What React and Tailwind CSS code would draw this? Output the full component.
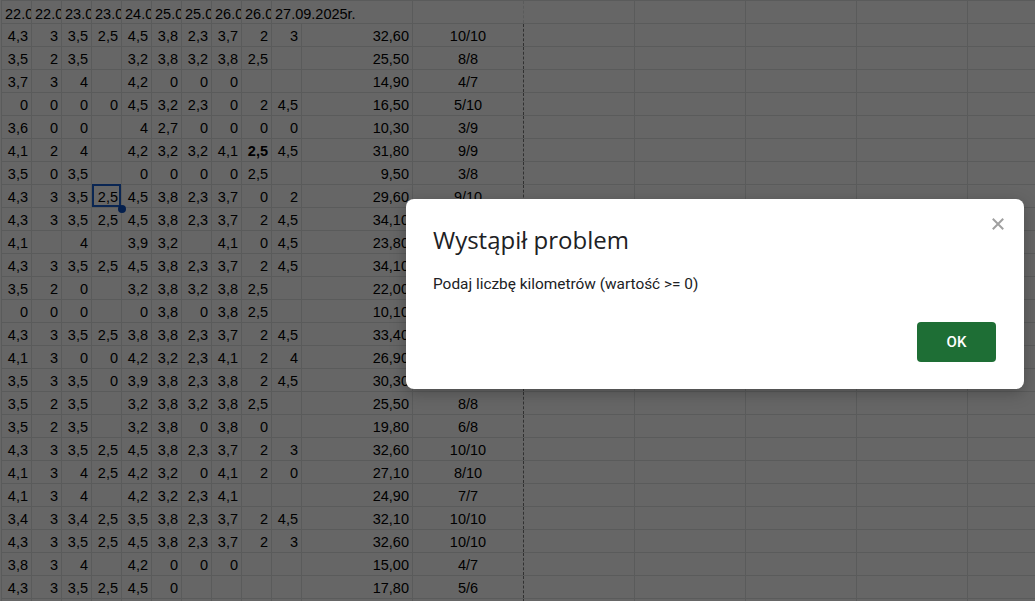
import React from 'react';

// sheet data: columns A..L, empty string = empty cell
const header = ['22.09.2025r.', '22.09.2025r.', '23.09.2025r.', '23.09.2025r.', '24.09.2025r.', '25.09.2025r.', '25.09.2025r.', '26.09.2025r.', '26.09.2025r.', '27.09.2025r.', '', ''];

const rows = [
  ['4,3', '3', '3,5', '2,5', '4,5', '3,8', '2,3', '3,7', '2', '3', '32,60', '10/10'],
  ['3,5', '2', '3,5', '', '3,2', '3,8', '3,2', '3,8', '2,5', '', '25,50', '8/8'],
  ['3,7', '3', '4', '', '4,2', '0', '0', '0', '', '', '14,90', '4/7'],
  ['0', '0', '0', '0', '4,5', '3,2', '2,3', '0', '2', '4,5', '16,50', '5/10'],
  ['3,6', '0', '0', '', '4', '2,7', '0', '0', '0', '0', '10,30', '3/9'],
  ['4,1', '2', '4', '', '4,2', '3,2', '3,2', '4,1', '2,5', '4,5', '31,80', '9/9'],
  ['3,5', '0', '3,5', '', '0', '0', '0', '0', '2,5', '', '9,50', '3/8'],
  ['4,3', '3', '3,5', '2,5', '4,5', '3,8', '2,3', '3,7', '0', '2', '29,60', '9/10'],
  ['4,3', '3', '3,5', '2,5', '4,5', '3,8', '2,3', '3,7', '2', '4,5', '34,10', '10/10'],
  ['4,1', '', '4', '', '3,9', '3,2', '', '4,1', '0', '4,5', '23,80', '7/8'],
  ['4,3', '3', '3,5', '2,5', '4,5', '3,8', '2,3', '3,7', '2', '4,5', '34,10', '10/10'],
  ['3,5', '2', '0', '', '3,2', '3,8', '3,2', '3,8', '2,5', '', '22,00', '8/8'],
  ['0', '0', '0', '', '0', '3,8', '0', '3,8', '2,5', '', '10,10', '4/8'],
  ['4,3', '3', '3,5', '2,5', '3,8', '3,8', '2,3', '3,7', '2', '4,5', '33,40', '10/10'],
  ['4,1', '3', '0', '0', '4,2', '3,2', '2,3', '4,1', '2', '4', '26,90', '10/10'],
  ['3,5', '3', '3,5', '0', '3,9', '3,8', '2,3', '3,8', '2', '4,5', '30,30', '10/10'],
  ['3,5', '2', '3,5', '', '3,2', '3,8', '3,2', '3,8', '2,5', '', '25,50', '8/8'],
  ['3,5', '2', '3,5', '', '3,2', '3,8', '0', '3,8', '0', '', '19,80', '6/8'],
  ['4,3', '3', '3,5', '2,5', '4,5', '3,8', '2,3', '3,7', '2', '3', '32,60', '10/10'],
  ['4,1', '3', '4', '2,5', '4,2', '3,2', '0', '4,1', '2', '0', '27,10', '8/10'],
  ['4,1', '3', '4', '', '4,2', '3,2', '2,3', '4,1', '', '', '24,90', '7/7'],
  ['3,4', '3', '3,4', '2,5', '3,5', '3,8', '2,3', '3,7', '2', '4,5', '32,10', '10/10'],
  ['4,3', '3', '3,5', '2,5', '4,5', '3,8', '2,3', '3,7', '2', '3', '32,60', '10/10'],
  ['3,8', '3', '4', '', '4,2', '0', '0', '0', '', '', '15,00', '4/7'],
  ['4,3', '3', '3,5', '2,5', '4,5', '0', '', '', '', '', '17,80', '5/6'],
  ['', '', '', '', '', '', '', '', '', '', '', ''],
];

const EMPTY_COLS = 5; // M..Q

function cellWidth(i) {
  return i < 10 ? 'w-[30px]' : 'w-[111px]';
}

function HeaderRow() {
  return (
    <div className="flex h-[23px] border-b border-[#e2e3e3]">
      {header.map((t, i) => (
        <div
          key={i}
          className={`${cellWidth(i)} shrink-0 h-full pt-[5px] pl-[3px] leading-4 whitespace-nowrap ${
            i === 9 ? 'overflow-visible' : 'overflow-hidden border-r border-[#e2e3e3]'
          } ${i === 11 ? 'border-dashed border-[#7c7c7c]' : ''}`}
        >
          {t}
        </div>
      ))}
      {Array.from({ length: EMPTY_COLS }).map((_, i) => (
        <div key={'e' + i} className="w-[111px] shrink-0 h-full border-r border-[#e2e3e3]" />
      ))}
    </div>
  );
}

function DataRow({ cells, rowIndex }) {
  return (
    <div className="flex h-[23px] border-b border-[#e2e3e3]">
      {cells.map((t, i) => {
        const bold = rowIndex === 5 && i === 8;
        const selected = rowIndex === 7 && i === 3;
        return (
          <div
            key={i}
            className={`${cellWidth(i)} shrink-0 h-full pt-[4px] leading-4 whitespace-nowrap overflow-visible border-r ${
              i === 11 ? 'text-center border-dashed border-[#7c7c7c]' : 'text-right pr-[3px] border-[#e2e3e3]'
            } ${bold ? 'font-bold' : ''} ${selected ? 'relative' : ''}`}
          >
            {t}
            {selected && (
              <>
                <div className="absolute -top-px left-0 right-0 bottom-0 border-2 border-[#1a5fd0]" />
                <div className="absolute right-[-5px] bottom-[-6px] w-[8px] h-[8px] rounded-full bg-[#0b4fc0]" />
              </>
            )}
          </div>
        );
      })}
      {Array.from({ length: EMPTY_COLS }).map((_, i) => (
        <div key={'e' + i} className="w-[111px] shrink-0 h-full border-r border-[#e2e3e3]" />
      ))}
    </div>
  );
}

export default function App() {
  return (
    <div className="relative w-[1035px] h-[601px] overflow-hidden bg-white">
      {/* Sheet */}
      <div className="ml-px border-l border-t border-[#e2e3e3] text-black text-[14.5px] font-['Liberation_Sans',Arial,sans-serif]">
        <HeaderRow />
        {rows.map((r, idx) => (
          <DataRow key={idx} cells={r} rowIndex={idx} />
        ))}
      </div>

      {/* Modal backdrop */}
      <div className="absolute inset-0 bg-black/60" />

      {/* Dialog */}
      <div className="absolute left-[406px] top-[199px] w-[618px] bg-white rounded-lg shadow-[0_4px_16px_rgba(0,0,0,0.25)] pt-[25px] px-[27px] pb-[27px]">
        <button className="absolute top-[19px] right-[20px] w-[12px] h-[12px] text-[#a0a0a0]">
          <svg viewBox="0 0 12 12" className="w-[12px] h-[12px]" fill="none" stroke="currentColor" strokeWidth="2" strokeLinecap="square">
            <path d="M1.5 1.5 L10.5 10.5 M10.5 1.5 L1.5 10.5" />
          </svg>
        </button>
        <h2 className="text-[24px] leading-8 text-[#202124] font-['Open_Sans',Roboto,sans-serif] font-normal">
          Wystąpił problem
        </h2>
        <p className="mt-[18px] text-[15.4px] leading-5 text-[#202124] font-['Roboto',sans-serif]">
          Podaj liczbę kilometrów (wartość &gt;= 0)
        </p>
        <div className="mt-[28px] flex justify-end pr-px">
          <button className="w-[79px] h-[40px] rounded-[4px] bg-[#1e6e35] text-white text-[15px] font-medium font-['Roboto',sans-serif]">
            OK
          </button>
        </div>
      </div>
    </div>
  );
}
